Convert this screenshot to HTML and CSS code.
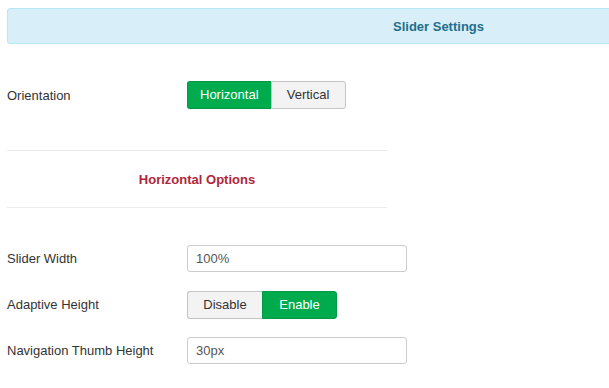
FILE: index.html
```html
<!DOCTYPE html>
<html lang="en">
<head>
    <meta charset="UTF-8">
    <meta name="viewport" content="width=device-width, initial-scale=1.0">
    <title>Slider Settings</title>

    <link rel="stylesheet" href="styles.css">
</head>
<body>
    <div class="page">
        <div class="alert-wrap">
            <div class="alert-info">Slider Settings</div>
        </div>

        <div class="control-group first">
            <div class="control-label">Orientation</div>
            <div class="controls">
                <div class="btn-group">
                    <span class="btn active">Horizontal</span>
                    <span class="btn">Vertical</span>
                </div>
            </div>
        </div>

        <hr class="sep">
        <div class="spacer-title">Horizontal Options</div>
        <hr class="sep">

        <div class="control-group">
            <div class="control-label">Slider Width</div>
            <div class="controls">
                <input class="input" type="text" value="100%">
            </div>
        </div>

        <div class="control-group">
            <div class="control-label">Adaptive Height</div>
            <div class="controls">
                <div class="btn-group">
                    <span class="btn">Disable</span>
                    <span class="btn active">Enable</span>
                </div>
            </div>
        </div>

        <div class="control-group">
            <div class="control-label">Navigation Thumb Height</div>
            <div class="controls">
                <input class="input" type="text" value="30px">
            </div>
        </div>
    </div>
</body>
</html>
```

FILE: styles.css
```css
html, body{
    margin: 0;
    overflow: hidden;
}

body{
    font-family: "Liberation Sans", Arial, sans-serif;
    font-size: 13px;
    color: #333;
    background-color: #fff;
}

.page{
    padding: 8px 0 0 7px;
}

/* the blue bar is wider than the window, cut it here */
.alert-wrap{
    overflow: hidden;
}

.alert-info{
    box-sizing: border-box;
    width: 863px;
    height: 36px;
    line-height: 36px;
    text-align: center;
    font-weight: bold;
    color: #226e8c;
    background-color: #d8eef8;
    border: 1px solid #b6e6f1;
    border-radius: 3px;
}

.control-group{
    display: flex;
    align-items: center;
    height: 27px;
    margin-bottom: 19px;
}

.control-group.first{
    height: 28px;
    margin-top: 37px;
    margin-bottom: 0;
}

.control-label{
    width: 180px;
}

.btn-group{
    display: flex;
}

.btn{
    box-sizing: border-box;
    min-width: 75px;
    height: 28px;
    line-height: 26px;
    padding: 0 12px;
    text-align: center;
    color: #333;
    background-color: #f3f3f3;
    border: 1px solid #c4c4c4;
}

.btn:first-child{
    border-radius: 3px 0 0 3px;
    border-right: 0;
}

.btn:last-child{
    border-radius: 0 3px 3px 0;
}

.btn.active{
    color: #fff;
    background-color: #00ab4e;
    border-color: #009a44;
}

.sep{
    width: 380px;
    margin: 0;
    border: 0;
    border-top: 1px solid #eaeaea;
}

.first + .sep{
    margin-top: 41px;
}

.spacer-title{
    height: 56px;
    line-height: 58px;
    width: 380px;
    text-align: center;
    font-weight: bold;
    color: #b0263a;
}

.spacer-title + .sep{
    margin-bottom: 37px;
}

.input{
    box-sizing: border-box;
    width: 220px;
    height: 27px;
    margin: 0;
    padding: 0 8px;
    font-family: "Liberation Sans", Arial, sans-serif;
    font-size: 13px;
    color: #555;
    border: 1px solid #ccc;
    border-radius: 3px;
    outline: none;
}
```
